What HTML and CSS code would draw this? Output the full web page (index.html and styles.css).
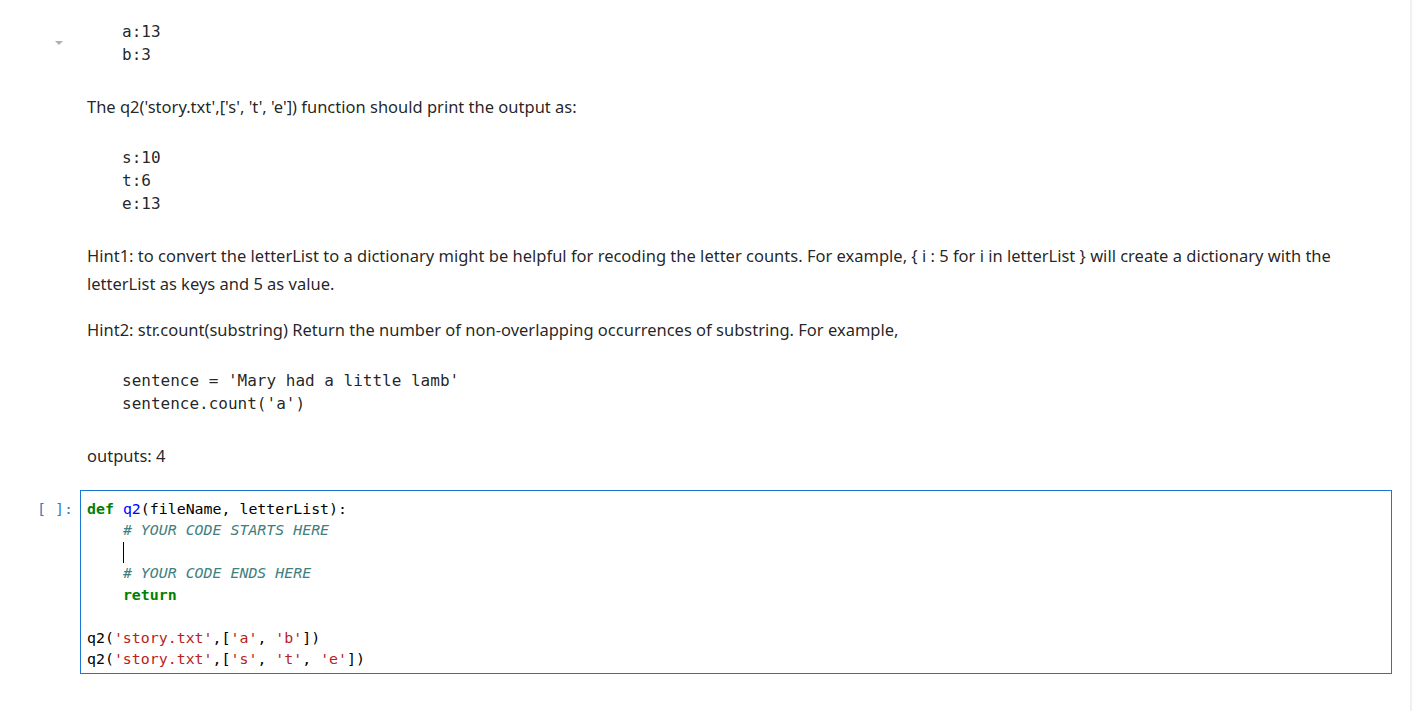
FILE: index.html
```html
<!DOCTYPE html>
<html>
<head>
<meta charset="utf-8">
<link rel="stylesheet" href="styles.css">
</head>
<body>
<div class="page">
  <div class="notebook">
    <div class="cell md-cell">
      <div class="collapser"><span class="caret"></span></div>
      <div class="md">
        <pre class="md-pre first">a:13
b:3</pre>
        <p>The q2('story.txt',['s', 't', 'e']) function should print the output as:</p>
        <pre class="md-pre">s:10
t:6
e:13</pre>
        <p>Hint1: to convert the letterList to a dictionary might be helpful for recoding the letter counts. For example, { i : 5 for i in letterList } will create a dictionary with the letterList as keys and 5 as value.</p>
        <p>Hint2: str.count(substring) Return the number of non-overlapping occurrences of substring. For example,</p>
        <pre class="md-pre">sentence = 'Mary had a little lamb'
sentence.count('a')</pre>
        <p class="last">outputs: 4</p>
      </div>
    </div>
    <div class="cell code-cell">
      <div class="prompt">[&nbsp;]:</div>
      <div class="editor">
        <div class="code">
          <div class="line"><span class="kw">def</span> <span class="fn">q2</span><span>(fileName, letterList):</span></div>
          <div class="line">    <span class="cm"># YOUR CODE STARTS HERE</span></div>
          <div class="line">    <span class="cursor"></span></div>
          <div class="line">    <span class="cm"># YOUR CODE ENDS HERE</span></div>
          <div class="line">    <span class="kw">return</span></div>
          <div class="line"> </div>
          <div class="line"><span>q2(</span><span class="st">'story.txt'</span><span>,[</span><span class="st">'a'</span><span>, </span><span class="st">'b'</span><span>])</span></div>
          <div class="line"><span>q2(</span><span class="st">'story.txt'</span><span>,[</span><span class="st">'s'</span><span>, </span><span class="st">'t'</span><span>, </span><span class="st">'e'</span><span>])</span></div>
        </div>
      </div>
    </div>
  </div>
  <div class="scrollbar"></div>
</div>
</body>
</html>
```
FILE: styles.css
```css
html, body {
  margin: 0;
  padding: 0;
  background: #ffffff;
}
.page {
  display: flex;
  width: 1412px;
  height: 711px;
  overflow: hidden;
}
.notebook {
  flex: 1;
  padding-top: 20px;
}
.scrollbar {
  width: 2px;
  background: #f0f0f0;
}
.cell {
  display: flex;
}
.md-cell {
  position: relative;
}
.collapser {
  width: 87px;
  flex: none;
  position: relative;
}
.caret {
  position: absolute;
  left: 55px;
  top: 21px;
  width: 0;
  height: 0;
  border-left: 4px solid transparent;
  border-right: 4px solid transparent;
  border-top: 4px solid #b0b0b0;
}
.md {
  flex: 1;
  padding-right: 20px;
  font-family: "Noto Sans", "Open Sans", sans-serif;
  font-size: 16.5px;
  color: rgba(0, 0, 0, 0.87);
}
.md p {
  margin: 0 0 18px 0;
  line-height: 28px;
}
.md p.last {
  margin-bottom: 20px;
}
.md-pre {
  margin: 25.5px 0 26.5px 35px;
  font-family: "DejaVu Sans Mono", monospace;
  font-size: 16px;
  line-height: 23px;
  color: rgba(0, 0, 0, 0.87);
}
.md-pre.first {
  margin-top: 0;
}
.code-cell {
  align-items: flex-start;
}
.prompt {
  width: 80px;
  flex: none;
  box-sizing: border-box;
  padding-left: 37px;
  padding-top: 9px;
  font-family: "DejaVu Sans Mono", monospace;
  font-size: 14.9px;
  line-height: 21.5px;
  color: #307fc1;
}
.editor {
  width: 1312px;
  box-sizing: border-box;
  border: 1px solid #1976d2;
  padding: 8px 6px 2px 6px;
  background: #ffffff;
}
.code {
  font-family: "DejaVu Sans Mono", monospace;
  font-size: 14.9px;
  line-height: 21.5px;
  color: #000000;
}
.line {
  white-space: pre;
  height: 21.5px;
}
.kw {
  color: #008000;
  font-weight: bold;
}
.fn {
  color: #0000ff;
}
.cm {
  color: #408080;
  font-style: italic;
}
.st {
  color: #ba2121;
}
.cursor {
  display: inline-block;
  width: 1px;
  height: 21px;
  background: #000000;
  vertical-align: top;
}
```
